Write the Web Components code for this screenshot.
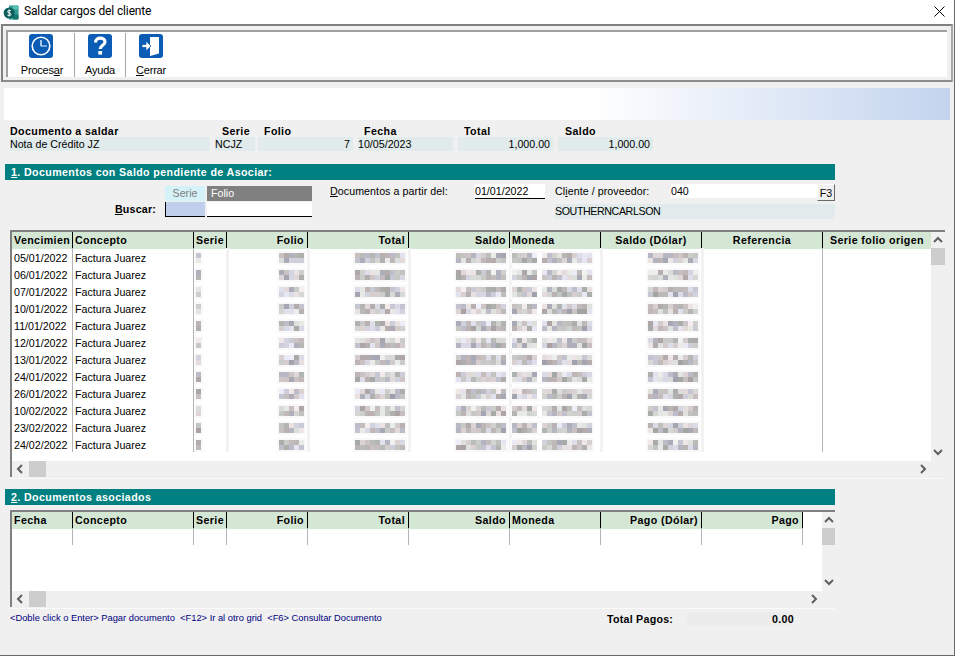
<!DOCTYPE html>
<html lang="es">

<head>
    <meta charset="utf-8">
    <title>Saldar cargos del cliente</title>
    <style>
        html, body { margin: 0; padding: 0; background: #fff; }
        body { font: 10.67px "Liberation Sans", Arial, sans-serif; color: #000; }
    </style>
</head>

<body>
    <saldar-window>
        <title-bar slot="title">Saldar cargos del cliente</title-bar>
        <tool-bar slot="tools">
            <tool-button label="Procesar" mark="6" icon="clock"></tool-button>
            <tool-button label="Ayuda" icon="help"></tool-button>
            <tool-button label="Cerrar" mark="0" icon="exit"></tool-button>
        </tool-bar>
        <doc-summary slot="summary"></doc-summary>
        <section-bar slot="first" num="1" text=". Documentos con Saldo pendiente de Asociar:"></section-bar>
        <search-panel slot="search"></search-panel>
        <doc-grid slot="gridone" mode="pending"></doc-grid>
        <section-bar slot="second" num="2" text=". Documentos asociados"></section-bar>
        <doc-grid slot="gridtwo" mode="linked"></doc-grid>
        <hint-footer slot="footer"></hint-footer>
    </saldar-window>

    <script>
        class SaldarWindow extends HTMLElement {
            constructor() {
                super();
                this.attachShadow({ mode: 'open' });
                this.shadowRoot.innerHTML = `
                <style>
                    :host { display: block; width: 954px; height: 655px; background: #f0f0f0;
                        border-right: 1px solid #696969; border-bottom: 1px solid #696969; overflow: hidden; }
                    .banner { height: 32px; margin: 6px 4px 0 4px;
                        background: linear-gradient(90deg, #fff 0, #fff 62%, #c3d4ee 100%); }
                    .summary { display: block; margin-top: 5px; }
                    .first { display: block; margin-top: 13px; }
                    .search { display: block; margin-top: 4px; }
                    .gridone { display: block; margin-top: 10px; }
                    .second { display: block; margin-top: 10px; }
                    .gridtwo { display: block; margin-top: 5px; }
                    .footer { display: block; margin-top: 1px; }
                </style>
                <slot name="title"></slot>
                <slot name="tools"></slot>
                <div class="banner"></div>
                <div class="summary"><slot name="summary"></slot></div>
                <div class="first"><slot name="first"></slot></div>
                <div class="search"><slot name="search"></slot></div>
                <div class="gridone"><slot name="gridone"></slot></div>
                <div class="second"><slot name="second"></slot></div>
                <div class="gridtwo"><slot name="gridtwo"></slot></div>
                <div class="footer"><slot name="footer"></slot></div>
                `;
            }
        }

        class TitleBar extends HTMLElement {
            constructor() {
                super();
                this.attachShadow({ mode: 'open' });
                this.shadowRoot.innerHTML = `
                <style>
                    :host { display: flex; align-items: center; height: 24px; background: #fff;
                        font: 12px Roboto, sans-serif; letter-spacing: -.14px; color: #000; }
                    .logo { margin: 0 4px 0 3px; flex: none; }
                    .txt { flex: 1; margin-top: -2px; }
                    .close { margin-right: 9px; margin-top: -2px; flex: none; }
                </style>
                <svg class="logo" width="17" height="17" viewBox="0 0 17 17">
                    <path d="M6 1.500h8.500a1 1 0 0 1 1 1v12a1 1 0 0 1-1 1H6z" fill="#2f9d92"/>
                    <path d="M10 1.500h4.500a1 1 0 0 1 1 1v3H10z" fill="#56bdb0"/>
                    <path d="M10 10.500h5.500v4a1 1 0 0 1-1 1H10z" fill="#17756f"/>
                    <circle cx="6.200" cy="9" r="5.600" fill="#0d5f5c"/>
                    <path d="M8 6.900c-.5-.6-3.400-.9-3.400.8 0 1.700 3.400.8 3.400 2.600 0 1.700-3 1.400-3.600.7M6.200 5.500v7" fill="none" stroke="#fff" stroke-width="1"/>
                </svg>
                <span class="txt"><slot></slot></span>
                <svg class="close" width="11" height="11" viewBox="0 0 11 11">
                    <path d="M.5 .5l10 10M10.500 .5l-10 10" stroke="#000" stroke-width="1" fill="none"/>
                </svg>
                `;
            }
        }

        class ToolBar extends HTMLElement {
            constructor() {
                super();
                this.attachShadow({ mode: 'open' });
                this.shadowRoot.innerHTML = `
                <style>
                    :host { display: block; box-sizing: border-box; height: 58px; margin: 0 0 0 1px; width: 952px;
                        border: 2px solid #808080; border-right-color: #a8a8a8; border-bottom-color: #8c8c8c;
                        padding: 4px 4px 3px 3px; background: #f0f0f0; }
                    .panel { box-sizing: border-box; height: 100%; width: 941px; background: #fff;
                        border-top: 2px solid #a0a0a0; border-left: 2px solid #a0a0a0;
                        display: flex; padding-left: 0; }
                </style>
                <div class="panel"><slot></slot></div>
                `;
            }
        }

        const TOOL_ICONS = {
            clock: `<circle cx="12" cy="12" r="8.800" fill="none" stroke="#fff" stroke-width="1.600"/>
                    <path d="M12 6v6.300" fill="none" stroke="#fff" stroke-width="1.300"/>
                    <path d="M12 12h6" fill="none" stroke="#b9d0ee" stroke-width="1.300"/>`,
            help: `<path d="M7.500 8.500c0-6 9.500-5.500 9.500-.5 0 3.300-4.800 3.300-4.800 7" fill="none" stroke="#fff" stroke-width="3.200"/>
                   <rect x="10.300" y="17" width="3.800" height="3.600" fill="#fff"/>`,
            exit: `<path d="M11 3h9v16.500l-9 2.500z" fill="#fff"/>
                   <path d="M3 10.500h4V7l5 5-5 5v-3.500H3z" fill="#fff" stroke="#0a5cb4" stroke-width=".8"/>`
        };

        class ToolButton extends HTMLElement {
            constructor() {
                super();
                this.attachShadow({ mode: 'open' });
            }

            connectedCallback() {
                const label = this.getAttribute('label');
                const mark = this.getAttribute('mark');
                let text = label;
                if (mark !== null) {
                    const i = Number(mark);
                    text = label.slice(0, i) + '<u>' + label[i] + '</u>' + label.slice(i + 1);
                }
                const w = { Procesar: 67, Ayuda: 51, Cerrar: 50 }[label];
                const nudge = label === 'Procesar' ? 2 : 0;
                this.shadowRoot.innerHTML = `
                <style>
                    :host { display: flex; flex-direction: column; align-items: center; box-sizing: border-box;
                        width: ${w}px; height: 44px; margin-top: 1px; border-right: 1px solid #a8a8a8; }
                    :host(:last-child) { border-right: 0; }
                    svg { display: block; margin-top: 1px; }
                    .lab { margin-top: 5px; padding-left: ${nudge}px; font: 11px "Liberation Sans", sans-serif; line-height: 14px; letter-spacing: -.2px; }
                </style>
                <svg width="24" height="24" viewBox="0 0 24 24">
                    <rect width="24" height="24" rx="3" fill="#0a5cb4"/>
                    ${TOOL_ICONS[this.getAttribute('icon')]}
                </svg>
                <span class="lab">${text}</span>
                `;
            }
        }

        class DocSummary extends HTMLElement {
            constructor() {
                super();
                this.attachShadow({ mode: 'open' });
                this.shadowRoot.innerHTML = `
                <style>
                    :host { display: grid; grid-template-columns: 205px 43px 100px 100px 100px 95px;
                        padding-left: 10px; font: 10.67px "Liberation Sans", sans-serif; }
                    b { height: 12px; line-height: 12px; padding-left: 6px; letter-spacing: .38px; }
                    b.first { padding-left: 0; }
                    b.wide { padding-left: 7px; }
                    span { height: 14px; line-height: 14px; background: #e1ebeb; white-space: nowrap; margin-right: 5px; }
                    span.tight { margin-right: 3px; }
                    span.end { margin-right: 0; }
                    .r { text-align: right; padding-right: 3px; }
                </style>
                <b class="first">Documento a saldar</b><b class="wide">Serie</b><b>Folio</b><b>Fecha</b><b>Total</b><b class="wide">Saldo</b>
                <span>Nota de Crédito JZ</span><span class="tight">NCJZ</span><span class="r">7</span><span>10/05/2023</span>
                <span class="r">1,000.00</span><span class="r end">1,000.00</span>
                `;
            }
        }

        class SectionBar extends HTMLElement {
            constructor() {
                super();
                this.attachShadow({ mode: 'open' });
            }

            connectedCallback() {
                this.shadowRoot.innerHTML = `
                <style>
                    :host { display: block; box-sizing: border-box; width: 830px; height: 16px; margin-left: 5px;
                        padding-left: 6px; background: #008080; color: #fff;
                        font: bold 10.67px/16px "Liberation Sans", sans-serif; letter-spacing: .38px; }
                </style>
                <u>${this.getAttribute('num')}</u>${this.getAttribute('text')}
                `;
            }
        }

        class SearchPanel extends HTMLElement {
            constructor() {
                super();
                this.attachShadow({ mode: 'open' });
                this.shadowRoot.innerHTML = `
                <style>
                    :host { display: grid; box-sizing: border-box; width: 835px; height: 36px;
                        grid-template-columns: 165px 40px 2px 105px 18px 145px 120px 146px 18px;
                        grid-template-rows: 15px 2px 2px 15px;
                        font: 10.67px "Liberation Sans", sans-serif; }
                    .head { grid-row: 1 / 3; margin-top: 2px; height: 15px; line-height: 15px; }
                    .serie { grid-column: 2; background: #d4f2f8; color: #808080; text-align: center; }
                    .folio { grid-column: 4; background: #808080; color: #fff; padding-left: 4px; }
                    .buscar { grid-column: 1; grid-row: 3 / 5; text-align: right; padding-right: 9px; font-weight: bold;
                        line-height: 17px; letter-spacing: .2px; }
                    .inp1 { grid-column: 2; grid-row: 3 / 5; background: #c0d0ec; border-left: 1px solid #000; border-bottom: 1px solid #000; margin: 1px 0; }
                    .inp2 { grid-column: 4; grid-row: 3 / 5; background: #fff; border-bottom: 1px solid #000; margin: 1px 0; }
                </style>
                <div class="head serie">Serie</div>
                <div class="head folio">Folio</div>
                <div class="buscar"><u>B</u>uscar:</div>
                <div class="inp1"></div>
                <div class="inp2"></div>
                <client-fields style="grid-column: 6 / 10; grid-row: 1 / 5"></client-fields>
                `;
            }
        }

        class ClientFields extends HTMLElement {
            constructor() {
                super();
                this.attachShadow({ mode: 'open' });
                this.shadowRoot.innerHTML = `
                <style>
                    :host { display: grid; height: 36px;
                        grid-template-columns: 145px 70px 10px 116px 146px 18px;
                        grid-template-rows: 15px 3px 2px 15px; line-height: 15px; }
                    .lab { grid-row: 1; white-space: nowrap; letter-spacing: .07px; }
                    .date { grid-column: 2; grid-row: 1; background: #fff; border-bottom: 1px solid #000; box-sizing: border-box; height: 15px; line-height: 14px; }
                    .code { grid-column: 5; grid-row: 1; background: #fff; height: 14px; line-height: 14px; }
                    .f3 { grid-column: 6; grid-row: 1 / 3; box-sizing: border-box; height: 17px; background: #f0f0f0;
                        border: 1px solid; border-color: #fff #696969 #696969 #fff; text-align: center; line-height: 16px; }
                    .name { grid-column: 4 / 7; grid-row: 4; background: #e1ebeb; letter-spacing: -.4px; }
                </style>
                <span class="lab"><u>D</u>ocumentos a partir del:</span>
                <span class="date">01/01/2022</span>
                <span class="lab" style="grid-column: 4">Cl<u>i</u>ente / proveedor:</span>
                <span class="code">040</span>
                <span class="f3">F3</span>
                <span class="name">SOUTHERNCARLSON</span>
                `;
            }
        }

        const CHEVRONS = {
            up: 'M1 6l4-4 4 4',
            down: 'M1 2l4 4 4-4',
            left: 'M6 1L2 5l4 4',
            right: 'M3 1l4 4-4 4'
        };

        class ScrollArrow extends HTMLElement {
            constructor() {
                super();
                this.attachShadow({ mode: 'open' });
            }

            connectedCallback() {
                const dir = this.getAttribute('dir-to');
                const wide = dir === 'up' || dir === 'down';
                this.shadowRoot.innerHTML = `
                <style>
                    :host { display: flex; align-items: center; justify-content: center; flex: none;
                        width: ${wide ? 14 : 17}px; height: ${wide ? 17 : 16}px; }
                    svg { display: block; margin-top: ${dir === 'down' ? -2 : 0}px; }
                </style>
                <svg width="${wide ? 10 : 9}" height="${wide ? 8 : 10}" viewBox="0 0 ${wide ? 10 : 9} ${wide ? 8 : 10}">
                    <path d="${CHEVRONS[dir]}" fill="none" stroke="#606060" stroke-width="2"/>
                </svg>
                `;
            }
        }

        // simple seeded random, blurred cells should look the same on every run
        function makeRandom(seed) {
            let s = seed;
            return () => {
                s = (s * 1664525 + 1013904223) % 4294967296;
                return s / 4294967296;
            };
        }

        class BlurCell extends HTMLElement {
            constructor() {
                super();
                this.attachShadow({ mode: 'open' });
            }

            connectedCallback() {
                const tiles = Number(this.getAttribute('tiles'));
                const rnd = makeRandom(Number(this.getAttribute('seed')));
                rnd(); rnd();
                const gaps = this.getAttribute('gaps') ? this.getAttribute('gaps').split(',').map(Number) : [];
                let html = '';
                for (let row = 0; row < 2; row++) {
                    for (let i = 0; i < tiles; i++) {
                        let col = '#fff';
                        if (gaps.indexOf(i) < 0) {
                            const base = (row === 0 ? 165 : 160) + Math.floor(rnd() * 75);
                            const tint = Math.floor(rnd() * 3);
                            const r = base + (tint === 0 ? 8 : 0);
                            const g = base + (tint === 1 ? 3 : 0);
                            const b = base + (tint === 2 ? 12 : 0);
                            col = `rgb(${r},${g},${b})`;
                        }
                        html += `<i style="background:${col}"></i>`;
                    }
                }
                this.shadowRoot.innerHTML = `
                <style>
                    :host { display: grid; grid-template-columns: repeat(${tiles}, 5px); grid-auto-rows: 5px;
                        box-shadow: 0 0 0 2px #f9f9f9; }
                </style>
                ${html}
                `;
            }
        }

        const PENDING_COLS = [
            ['Vencimien', 61, 'l'], ['Concepto', 121, 'l'], ['Serie', 33, 'c'], ['Folio', 81, 'r'],
            ['Total', 101, 'r'], ['Saldo', 101, 'r'], ['Moneda', 91, 'l'], ['Saldo (Dólar)', 101, 'c'],
            ['Referencia', 121, 'c'], ['Serie folio origen', 108, 'c']
        ];
        const LINKED_COLS = [
            ['Fecha', 61, 'l'], ['Concepto', 121, 'l'], ['Serie', 33, 'c'], ['Folio', 81, 'r'],
            ['Total', 101, 'r'], ['Saldo', 101, 'r'], ['Moneda', 91, 'l'], ['Pago (Dólar)', 101, 'r'], ['Pago', 101, 'r']
        ];
        const DATES = ['05/01/2022', '06/01/2022', '07/01/2022', '10/01/2022', '11/01/2022', '12/01/2022',
            '13/01/2022', '24/01/2022', '26/01/2022', '10/02/2022', '23/02/2022', '24/02/2022'];
        // tile counts of the blurred columns, right aligned except serie and moneda
        const BLURRED = { 2: [1], 3: [5], 4: [10], 5: [10], 6: [16, '5'], 7: [10] };

        class DocGrid extends HTMLElement {
            constructor() {
                super();
                this.attachShadow({ mode: 'open' });
            }

            connectedCallback() {
                const pending = this.getAttribute('mode') === 'pending';
                const cols = pending ? PENDING_COLS : LINKED_COLS;
                const rows = pending ? DATES : [null];
                const bodyH = pending ? 212 : 62;
                const fullW = pending ? 919 : 810;
                const tracks = cols.map(c => c[1] + 'px').join(' ');
                const head = cols.map((c, i) =>
                    `<div class="hd ${c[2]}${i === cols.length - 1 && pending ? ' nl' : ''}"><span>${c[0]}</span></div>`).join('');
                let cells = '';
                rows.forEach((date, r) => {
                    cols.forEach((c, i) => {
                        let inner = '';
                        let cls = 'cell';
                        if (date && BLURRED[i]) {
                            const b = BLURRED[i];
                            cls += i === 6 || i === 2 ? ' blur lft' : ' blur';
                            inner = `<blur-cell tiles="${b[0]}" gaps="${b[1] || ''}" seed="${(r + 1) * 131 + i * 977}"></blur-cell>`;
                        } else if (date && i === 0) {
                            inner = date;
                        } else if (date && i === 1) {
                            inner = 'Factura Juarez';
                        }
                        if (i === cols.length - 1 && pending) cls += ' nl';
                        cells += `<div class="${cls}">${inner}</div>`;
                    });
                });
                this.shadowRoot.innerHTML = `
                <style>
                    :host { display: block; box-sizing: content-box; margin-left: 10px;
                        width: ${pending ? 935 : 825}px; height: ${pending ? 246 : 96}px;
                        border-top: 2px solid #808080; border-bottom: 1px solid #fafafa; overflow: hidden;
                        font: 10.67px "Liberation Sans", sans-serif; }
                    .frame { display: grid; height: 100%; border-left: 2px solid #808080; margin-top: -1px;
                        grid-template-columns: ${fullW}px 1fr; grid-template-rows: ${bodyH + 18}px 16px; }
                    .view { background: #fff; overflow: hidden; }
                    .tbl { display: grid; grid-template-columns: ${tracks}; grid-auto-rows: 17px; }
                    .hd { box-sizing: border-box; height: 18px; background: #d4e6d4; border-right: 1px solid #000;
                        font-weight: bold; line-height: 18px; padding: 0 3px 0 2px; overflow: hidden; white-space: nowrap; letter-spacing: .38px; }
                    .hd.r { text-align: right; }
                    .hd.c { text-align: center; padding: 0; }
                    .hd.nl { border-right: 0; }
                    .cell { box-sizing: border-box; height: 17px; line-height: 20px; border-right: 1px solid #b4b4b4;
                        padding: 0 2px; white-space: nowrap; overflow: hidden; }
                    .cell.nl { border-right: 0; }
                    .cell.blur { display: flex; align-items: center; justify-content: flex-end; padding: 2px 3px 0 0;
                        border-right: 3px solid #f2f2f2; margin-right: -2px; }
                    .cell.blur.lft { justify-content: flex-start; padding: 2px 0 0 2px; }
                    .vbar { display: flex; flex-direction: column; background: #f0f0f0; }
                    .vthumb { height: 17px; flex: none; background: #cdcdcd; }
                    .fill { flex: 1; }
                    .hbar { display: flex; background: #f0f0f0; }
                    .hthumb { width: 17px; flex: none; background: #cdcdcd; }
                </style>
                <div class="frame">
                    <div class="view"><div class="tbl">${head}${cells}</div></div>
                    <div class="vbar">
                        <scroll-arrow dir-to="up"></scroll-arrow>
                        <div class="vthumb"></div>
                        <div class="fill"></div>
                        <scroll-arrow dir-to="down"></scroll-arrow>
                    </div>
                    <div class="hbar">
                        <scroll-arrow dir-to="left"></scroll-arrow>
                        <div class="hthumb"></div>
                        <div class="fill"></div>
                        <scroll-arrow dir-to="right"></scroll-arrow>
                    </div>
                    <div class="hbar"></div>
                </div>
                `;
            }
        }

        class HintFooter extends HTMLElement {
            constructor() {
                super();
                this.attachShadow({ mode: 'open' });
                this.shadowRoot.innerHTML = `
                <style>
                    :host { display: flex; align-items: center; box-sizing: border-box; width: 835px; height: 18px; padding-left: 10px; }
                    .hint { flex: none; width: 597px; margin-top: -3px; color: #000080; font: 9.33px "Liberation Sans", sans-serif; white-space: pre; }
                    .lab { flex: none; width: 80px; font: bold 10.67px "Liberation Sans", sans-serif; letter-spacing: .25px; }
                    .val { flex: none; box-sizing: border-box; width: 107px; height: 14px; line-height: 14px; background: #ececec;
                        text-align: right; font: bold 10.67px/14px "Liberation Sans", sans-serif; letter-spacing: .3px; }
                </style>
                <span class="hint">&lt;Doble click o Enter&gt; Pagar documento  &lt;F12&gt; Ir al otro grid  &lt;F6&gt; Consultar Documento</span>
                <span class="lab">Total Pagos:</span>
                <span class="val">0.00</span>
                `;
            }
        }

        customElements.define('saldar-window', SaldarWindow);
        customElements.define('title-bar', TitleBar);
        customElements.define('tool-bar', ToolBar);
        customElements.define('tool-button', ToolButton);
        customElements.define('doc-summary', DocSummary);
        customElements.define('section-bar', SectionBar);
        customElements.define('search-panel', SearchPanel);
        customElements.define('client-fields', ClientFields);
        customElements.define('scroll-arrow', ScrollArrow);
        customElements.define('blur-cell', BlurCell);
        customElements.define('doc-grid', DocGrid);
        customElements.define('hint-footer', HintFooter);
    </script>
</body>

</html>
